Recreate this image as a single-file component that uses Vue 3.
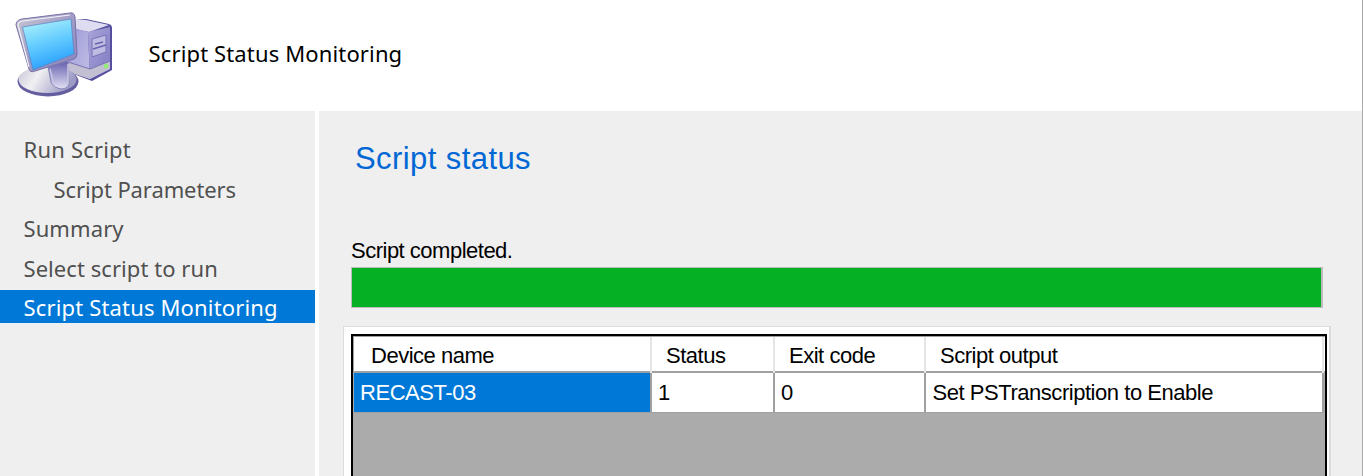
<script setup>
const steps = [
  { label: 'Run Script', cls: 'run' },
  { label: 'Script Parameters', cls: 'child' },
  { label: 'Summary', cls: 'summary' },
  { label: 'Select script to run', cls: 'select' },
  { label: 'Script Status Monitoring', cls: 'active' },
]
const columns = ['Device name', 'Status', 'Exit code', 'Script output']
const row = ['RECAST-03', '1', '0', 'Set PSTranscription to Enable']
</script>

<template>
  <div class="window">
    <header class="banner">
      <svg class="logo" width="112" height="104" viewBox="0 0 112 104">
        <defs>
          <linearGradient id="screen" x1="0.35" y1="0" x2="0.65" y2="1">
            <stop offset="0" stop-color="#a8effa" />
            <stop offset="0.45" stop-color="#64ccff" />
            <stop offset="1" stop-color="#2199fb" />
          </linearGradient>
          <linearGradient id="side" x1="0" y1="0" x2="1" y2="1">
            <stop offset="0" stop-color="#9c98d8" />
            <stop offset="1" stop-color="#c3c1e6" />
          </linearGradient>
          <linearGradient id="front" x1="0" y1="0" x2="1" y2="1">
            <stop offset="0" stop-color="#aaa6d9" />
            <stop offset="1" stop-color="#7f79c2" />
          </linearGradient>
          <linearGradient id="base" x1="0" y1="0" x2="1" y2="0.3">
            <stop offset="0" stop-color="#c6c3d4" />
            <stop offset="0.4" stop-color="#f1f0f2" />
            <stop offset="1" stop-color="#9d9ac5" />
          </linearGradient>
          <linearGradient id="neck" x1="0" y1="0" x2="0" y2="1">
            <stop offset="0" stop-color="#645eae" />
            <stop offset="1" stop-color="#e1e0f2" />
          </linearGradient>
          <linearGradient id="bezel" x1="0" y1="0" x2="1" y2="1">
            <stop offset="0" stop-color="#c9c8d4" />
            <stop offset="0.5" stop-color="#a19dc6" />
            <stop offset="1" stop-color="#8580be" />
          </linearGradient>
        </defs>
        <path d="M73 20 L84 19 L107 24 Q110 25 110 28 L110 70 L90 81 L66 72 Z" fill="#554f9e" />
        <path d="M73 20 L84 20 L107 25 L87 32 L73 29 Z" fill="#dedcf1" />
        <path d="M72 28 L86 32 L88 79 L66 71 Z" fill="url(#side)" />
        <path d="M86 32 L108 27 L108 69 L88 79 Z" fill="url(#front)" />
        <path d="M66 62 L88 69 L108 61 L108 69 L88 79 L66 72 Z" fill="#c1bfd1" />
        <path d="M66 62 L88 69 L108 61" fill="none" stroke="#7772b3" />
        <path d="M90 39 L104 35 L104 52 L90 57 Z" fill="#bfbce3" stroke="#7772b6" />
        <path d="M91 49 L104 45 M93 44 L101 42" stroke="#6963ad" stroke-width="1.500" />
        <ellipse cx="104" cy="66" rx="2" ry="2.500" fill="#8cf36b" />
        <ellipse cx="46" cy="81.500" rx="30.500" ry="15" fill="#645e9f" />
        <ellipse cx="45.500" cy="79.500" rx="29" ry="13.500" fill="url(#base)" />
        <path d="M46 67 L66 61 L67 81 Q68 88 60 89 Q51 88 49 82 Z" fill="url(#neck)" stroke="#8883bc" />
        <path d="M48 69 L52 85 M66 64 L66 84" stroke="#c6c3e0" stroke-width="1.500" />
        <path d="M14 25 Q14 20 20 19 L68 13 Q72 12 73 17 L75 54 Q75 58 72 59 L33 71 Q28 73 27 69 Z" fill="url(#bezel)" stroke="#7772a7" />
        <path d="M27 67 L16 25 Q16 22 21 21 L68 15" fill="none" stroke="#f2f1f5" stroke-width="1.200" />
        <path d="M20.500 27 L69 19 L72 54 L31 70 Z" fill="url(#screen)" stroke="#5d80be" stroke-width="0.700" />
      </svg>
      <h1><span>Script Status Monitoring</span></h1>
    </header>
    <div class="body">
      <nav class="steps">
        <div v-for="s in steps" :key="s.label" class="step" :class="s.cls"><span>{{ s.label }}</span></div>
      </nav>
      <main class="content">
        <h2><span>Script status</span></h2>
        <p><span>Script completed.</span></p>
        <div class="progress"></div>
        <div class="frame">
          <div class="grid">
            <div class="line head">
              <div v-for="(c, i) in columns" :key="c" :class="'h' + i"><span>{{ c }}</span></div>
            </div>
            <div class="line data">
              <div v-for="(c, i) in row" :key="c" :class="'d' + i"><span>{{ c }}</span></div>
            </div>
          </div>
        </div>
      </main>
    </div>
  </div>
</template>

<style>
body { margin: 0; overflow: hidden; }
</style>

<style scoped>
.window {
  box-sizing: border-box;
  width: 1363px;
  height: 476px;
  overflow: hidden;
  background: #fff;
  border-right: 1px solid #a9a9a9;
  font-family: "Liberation Sans", Arial, sans-serif;
  font-size: 22px;
  color: #000;
  display: flex;
  flex-direction: column;
}
.banner { height: 111px; flex: none; display: flex; }
.logo { flex: none; margin-left: 2px; margin-right: 34.5px; filter: blur(0.6px); }
h1, h2, p { margin: 0; font-weight: normal; white-space: nowrap; }
h1 {
  font: 22px/30px "Noto Sans", "Open Sans", sans-serif;
  letter-spacing: 0.14px;
  margin-top: 38px;
}
.body { flex: 1; display: flex; gap: 4px; min-height: 0; }
.steps {
  width: 315px;
  flex: none;
  background: #efefef;
  color: #505050;
  font-family: "Noto Sans", "Open Sans", sans-serif;
  letter-spacing: 0.1px;
  padding-top: 21px;
  box-sizing: border-box;
}
.step {
  height: 33px;
  line-height: 34px;
  margin-bottom: 6.5px;
  padding-left: 23.5px;
  white-space: nowrap;
}
.run { letter-spacing: 0.2px; }
.child { padding-left: 53.5px; letter-spacing: -0.1px; }
.select { letter-spacing: 0.06px; }
.active { background: #0078d7; color: #fff; letter-spacing: 0.16px; }
.content {
  flex: 1;
  min-width: 0;
  background: #efefef;
  display: flex;
  flex-direction: column;
}
h2 { font-size: 31px; letter-spacing: 0.42px; line-height: 36px; color: #0067d4; margin: 30px 0 0 36px; }
p { line-height: 26px; letter-spacing: -0.5px; margin: 61px 0 0 32px; }
.progress {
  box-sizing: border-box;
  width: 972px;
  height: 41px;
  flex: none;
  margin: 3px 0 0 32px;
  background: #06b025;
  border: 1px solid #bcbcbc;
  border-right-width: 2px;
}
.frame {
  box-sizing: border-box;
  width: 988px;
  height: 170px;
  flex: none;
  margin: 18px 0 0 24px;
  border: 2px solid #dcdcdc;
  border-left-width: 1px;
  border-top-width: 1px;
  background: #fff;
  padding: 7px 2px 0 7px;
}
.grid {
  box-sizing: border-box;
  height: 170px;
  border: 2px solid #000;
  background: #ababab;
}
.line {
  display: grid;
  grid-template-columns: 299px 123px 151px 398px;
  box-sizing: border-box;
  white-space: nowrap;
}
.line > div { box-sizing: border-box; }
.head { height: 37px; line-height: 37px; letter-spacing: -0.48px; background: #fff; border-top: 1px solid #a0a0a0; border-left: 1px solid #a0a0a0; border-bottom: 2px solid #a0a0a0; grid-template-columns: 298px 123px 151px 398px; }
.head > div { border-right: 2px solid #e5e5e5; padding-left: 14px; }
.head > .h0 { padding-left: 17px; }
.data { height: 38px; line-height: 39px; letter-spacing: -0.46px; }
.data > div { background: #fff; border-right: 2px solid #a0a0a0; border-bottom: 1px solid #a0a0a0; padding-left: 6px; }
.data > .d0 { background: #0078d7; color: #fff; border-left: 1px solid #ababab; }
.data > .d3 { padding-left: 6.5px; }
</style>
